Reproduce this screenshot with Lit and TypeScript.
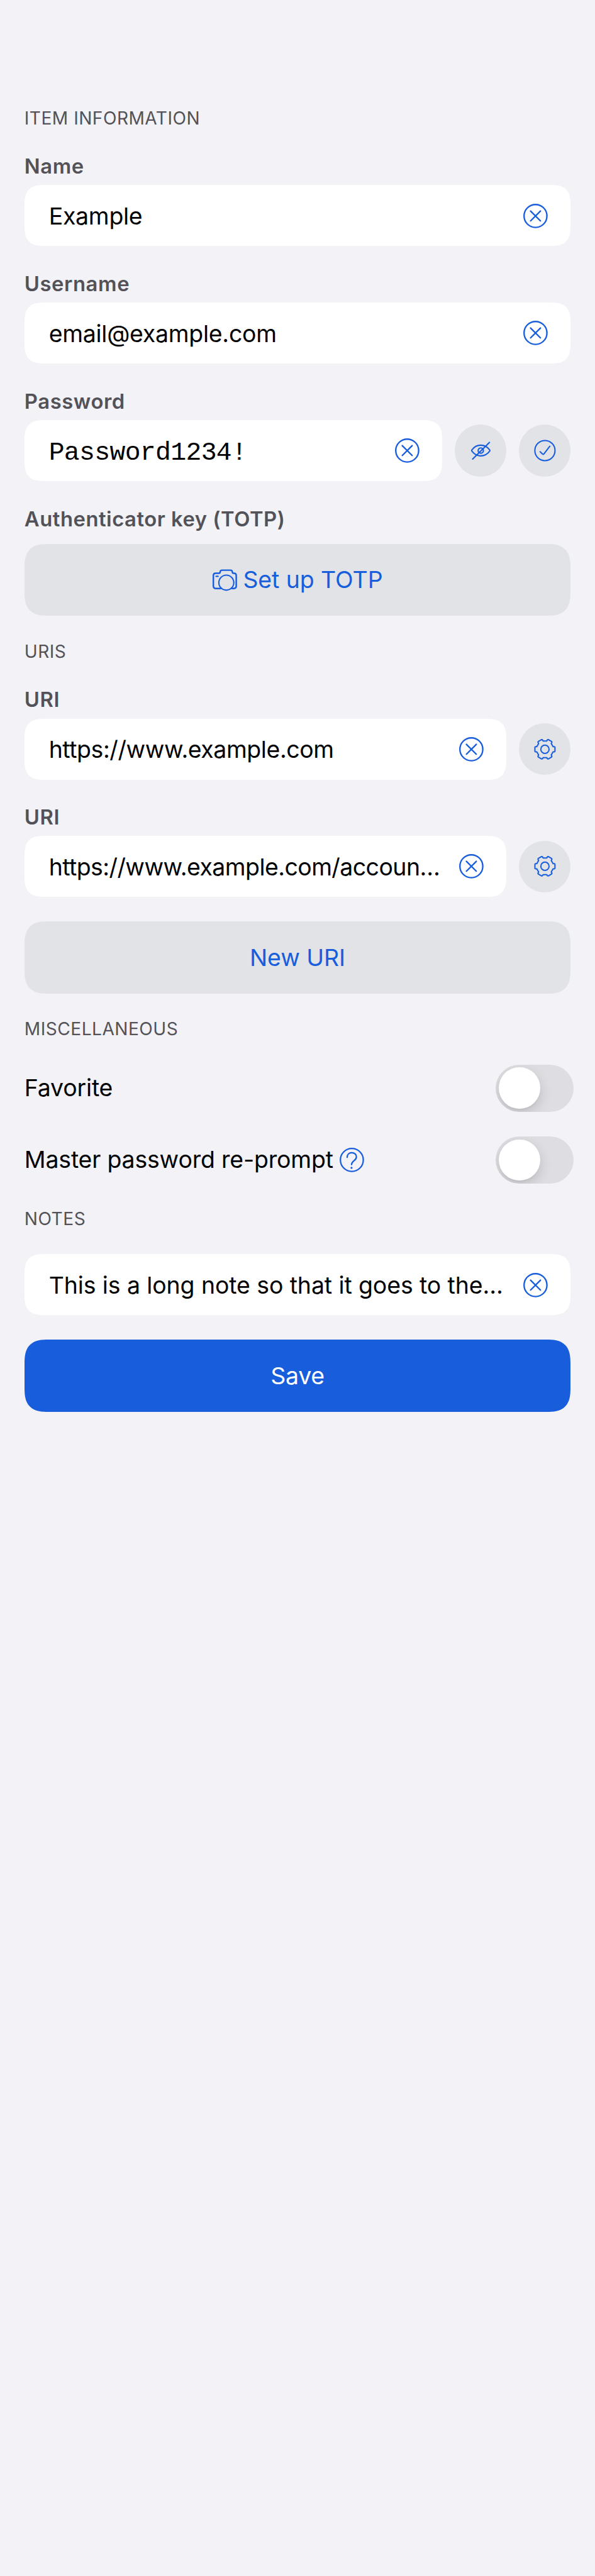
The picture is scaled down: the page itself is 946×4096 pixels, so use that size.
import { LitElement, html, css, svg, unsafeCSS } from "lit";
import { customElement, property } from "lit/decorators.js";

const SCALE = 4096 / 5064;
/** Converts a 3x design pixel into a CSS length. */
const u = (n: number) => unsafeCSS(`${(n * SCALE).toFixed(3)}px`);

function gearPath(): string {
  const tooth = [
    [16, -5.1], [18.6, -5.1], [19.7, -4], [19.7, 4], [18.6, 5.1], [16, 5.1],
  ];
  const points: string[] = [];
  for (let k = 0; k < 6; k++) {
    const a = (k * Math.PI) / 3;
    for (const [x, y] of tooth) {
      points.push(
        `${(x * Math.cos(a) - y * Math.sin(a)).toFixed(2)} ${(x * Math.sin(a) + y * Math.cos(a)).toFixed(2)}`
      );
    }
  }
  return `M${points.join("L")}Z`;
}

const ICONS: Record<string, unknown> = {
  clear: svg`<g stroke-width="2.9"><circle r="22.5"/><path d="M-9.7-9.7 9.7 9.7M9.7-9.7-9.7 9.7"/></g>`,
  eyeOff: svg`<g stroke-width="2.6"><path d="M-17.4-1.3C-13.5-6.6-7.5-10.5 0-10.5S13.5-6.6 17.4-1.3Q18.3 0 17.4 1.3C13.5 6.6 7.5 10.5 0 10.5S-13.5 6.6-17.4 1.3Q-18.3 0-17.4-1.3Z"/><circle r="5.2"/><path d="M-16 16.7 17-16"/></g>`,
  check: svg`<g stroke-width="2.5"><circle r="19.8"/><path d="M-9.5 2.3-4.6 7Q-3.3 8.2-2.1 6.8L9.7-8.6"/></g>`,
  gear: svg`<g stroke-width="2.5"><path d="${gearPath()}"/><circle r="8.1"/></g>`,
  help: svg`<g stroke-width="2.8"><circle r="22.5"/><path d="M-9.2-5C-9.2-10.8-5.2-14.3-.2-14.3 5-14.3 9-11 9-6.2 9 1.6-.6 1.4-.6 9.2"/><circle cx="-.6" cy="15.5" r="2" fill="currentColor" stroke="none"/></g>`,
  camera: svg`<g stroke-width="3"><path d="M-8.4 16.4H-18Q-22.5 16.4-22.5 12V-9.2Q-22.5-13.5-18-13.5H-11.5Q-9.2-13.5-9.2-15.6-9.2-19.5-5.2-19.5H11Q14.9-19.5 14.9-15.6 14.9-13.5 17.2-13.5H18Q22.5-13.5 22.5-9.2V12Q22.5 16.4 18 16.4H14.4"/><circle cx="3" cy="5" r="14.7" stroke-width="2.6"/><path d="M-16.8-7.5H-13.4"/></g>`,
};

@customElement("line-icon")
class LineIcon extends LitElement {
  @property() name = "clear";
  static styles = css`
    :host { display: block; flex: none; width: ${u(48)}; height: ${u(48)}; color: #175ddc; }
    svg { display: block; width: 100%; height: 100%; overflow: visible; fill: none; stroke: currentColor; stroke-linecap: round; stroke-linejoin: round; }
  `;
  render() {
    return html`<svg viewBox="-24 -24 48 48">${ICONS[this.name]}</svg>`;
  }
}

@customElement("form-field")
class FormField extends LitElement {
  @property() label = "";
  @property() value = "";
  @property() variant = "";
  @property({ type: Array }) actions: string[] = [];
  static styles = css`
    :host { display: block; }
    .label { height: ${u(54)}; line-height: ${u(55)}; margin-bottom: ${u(10.75)}; font-size: ${u(40.55)}; font-weight: 600; letter-spacing: ${u(0.72)}; color: #525258; }
    .row { display: flex; align-items: center; gap: ${u(24)}; }
    .box { flex: 1; min-width: 0; box-sizing: border-box; height: ${u(120)}; padding: 0 ${u(45)} 0 ${u(48)}; display: flex; align-items: center; justify-content: space-between; background: #fff; border-radius: ${u(40)}; corner-shape: superellipse(1.48); }
    .value { white-space: pre; font-size: ${u(46.3)}; line-height: ${u(118)}; padding-top: ${u(2)}; letter-spacing: ${u(-0.31)}; color: #000; }
    .url { letter-spacing: ${u(-0.51)}; }
    .long-url { letter-spacing: ${u(-0.69)}; }
    .note { letter-spacing: ${u(-0.116)}; }
    .mono { font-family: "Liberation Mono", monospace; font-size: ${u(51.2)}; line-height: ${u(112)}; padding-top: ${u(8)}; letter-spacing: ${u(-0.8)}; }
    .action { flex: none; width: ${u(102)}; height: ${u(102)}; border-radius: 50%; background: #e2e3e7; display: flex; align-items: center; justify-content: center; }
  `;
  render() {
    return html`
      ${this.label ? html`<div class="label">${this.label}</div>` : null}
      <div class="row">
        <div class="box">
          <span class="value ${this.variant}">${this.value}</span>
          <line-icon name="clear"></line-icon>
        </div>
        ${this.actions.map((a) => html`<div class="action"><line-icon name=${a}></line-icon></div>`)}
      </div>
    `;
  }
}

@customElement("toggle-row")
class ToggleRow extends LitElement {
  @property() label = "";
  @property({ type: Boolean }) help = false;
  static styles = css`
    :host { display: flex; align-items: center; justify-content: space-between; height: ${u(93)}; margin-right: ${u(-6)}; }
    .text { display: flex; align-items: center; gap: ${u(12)}; font-size: ${u(46.3)}; line-height: ${u(94)}; letter-spacing: ${u(-0.22)}; color: #000; }
    .track { width: ${u(153)}; height: ${u(93)}; box-sizing: border-box; padding: ${u(6)}; border-radius: ${u(46.5)}; background: #dedde2; overflow: hidden; }
    .knob { width: ${u(81)}; height: ${u(81)}; border-radius: 50%; background: #fff; box-shadow: 0 ${u(9)} ${u(24)} rgba(0, 0, 0, 0.15), 0 ${u(3)} ${u(3)} rgba(0, 0, 0, 0.03); }
  `;
  render() {
    return html`
      <div class="text">${this.label}${this.help ? html`<line-icon name="help"></line-icon>` : null}</div>
      <div class="track"><div class="knob"></div></div>
    `;
  }
}

@customElement("app-root")
class AppRoot extends LitElement {
  static styles = css`
    :host { display: block; box-sizing: border-box; min-height: 4096px; padding: ${u(207.3)} ${u(48)} 0; background: #f2f2f7; font-family: "Inter", sans-serif; }
    .section { display: flex; flex-direction: column; margin-bottom: ${u(45)}; }
    .heading { height: ${u(48)}; line-height: ${u(49.5)}; font-size: ${u(34.79)}; letter-spacing: ${u(0.59)}; color: #525258; margin-bottom: ${u(44)}; }
    .heading.loose { margin-bottom: ${u(46.2)}; }
    .fields { display: flex; flex-direction: column; gap: ${u(46.25)}; }
    .toggles { display: flex; flex-direction: column; gap: ${u(48)}; }
    .label { height: ${u(54)}; line-height: ${u(55)}; margin-bottom: ${u(22.75)}; font-size: ${u(40.55)}; font-weight: 600; letter-spacing: ${u(0.64)}; color: #525258; }
    .button { display: flex; align-items: center; justify-content: center; gap: ${u(12.5)}; height: ${u(142)}; border-radius: ${u(48)}; corner-shape: superellipse(1.48); background: #e2e3e7; color: #175ddc; font-size: ${u(46.3)}; letter-spacing: ${u(-0.09)}; }
    .spaced { margin-top: ${u(48)}; }
    .primary { background: #175ddc; color: #fff; letter-spacing: ${u(-0.4)}; }
  `;
  render() {
    return html`
      <div class="section">
        <div class="heading">ITEM INFORMATION</div>
        <div class="fields">
          <form-field label="Name" value="Example"></form-field>
          <form-field label="Username" value="email@example.com"></form-field>
          <form-field label="Password" value="Password1234!" variant="mono" .actions=${["eyeOff", "check"]}></form-field>
          <div>
            <div class="label">Authenticator key (TOTP)</div>
            <div class="button"><line-icon name="camera"></line-icon><span>Set up TOTP</span></div>
          </div>
        </div>
      </div>
      <div class="section">
        <div class="heading">URIS</div>
        <div class="fields">
          <form-field label="URI" value="https://www.example.com" variant="url" .actions=${["gear"]}></form-field>
          <form-field label="URI" value="https://www.example.com/accoun…" variant="long-url" .actions=${["gear"]}></form-field>
        </div>
        <div class="button spaced">New URI</div>
      </div>
      <div class="section">
        <div class="heading loose">MISCELLANEOUS</div>
        <div class="toggles">
          <toggle-row label="Favorite"></toggle-row>
          <toggle-row label="Master password re-prompt" help></toggle-row>
        </div>
      </div>
      <div class="section">
        <div class="heading loose">NOTES</div>
        <form-field value="This is a long note so that it goes to the…" variant="note"></form-field>
        <div class="button primary spaced">Save</div>
      </div>
    `;
  }
}
